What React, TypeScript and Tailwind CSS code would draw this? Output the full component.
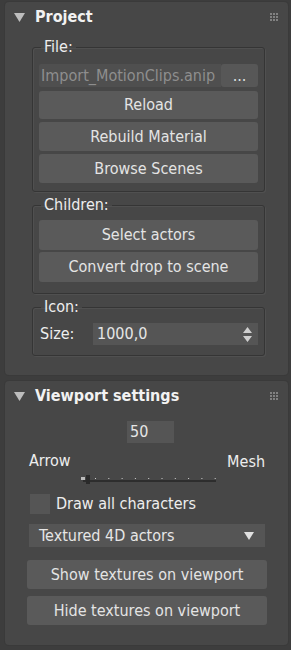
import { ReactNode } from "react";

const font = { fontFamily: '"DejaVu Sans Condensed", "DejaVu Sans", "Liberation Sans", sans-serif' };

function Grip() {
  return (
    <svg width="9" height="9" viewBox="0 0 9 9" className="opacity-70">
      {[0, 3, 6].map((y) =>
        [0, 3, 6].map((x) => (
          <rect key={`${x}-${y}`} x={x} y={y} width="2" height="2" fill="#9a9a9a" />
        ))
      )}
    </svg>
  );
}

function PanelHeader({ title }: { title: string }) {
  return (
    <div className="flex h-[30px] items-center pl-[9px] pr-[9px]">
      <svg width="11" height="9" viewBox="0 0 11 9" className="mr-[10px]">
        <path d="M0 0 H11 L5.5 9 Z" fill="#bdbdbd" />
      </svg>
      <span className="flex-1 text-[16px] font-bold text-[#f2f2f2]">{title}</span>
      <Grip />
    </div>
  );
}

function Button({ children, className = "" }: { children: ReactNode; className?: string }) {
  return (
    <div
      className={`flex items-center justify-center rounded-[3px] bg-[#5a5a5a] text-[16px] leading-[20px] text-[#e4e4e4] ${className}`}
    >
      {children}
    </div>
  );
}

function Group({ label, children, className = "" }: { label: string; children: ReactNode; className?: string }) {
  return (
    <fieldset
      className={`rounded-[3px] border border-[#353535] shadow-[inset_1px_1px_0_#505050,1px_1px_0_#505050] px-[6px] ${className}`}
    >
      <legend className="ml-[2px] px-[3px] text-[16px] leading-[18px] text-[#eeeeee]">{label}</legend>
      {children}
    </fieldset>
  );
}

export default function App() {
  return (
    <div className="min-h-[650px] w-[291px] bg-[#3d3d3d] pt-[2px]" style={font}>
      {/* Project */}
      <div className="ml-[5px] mr-[3px] h-[373px] rounded-[4px] bg-[#474747] shadow-[0_0_0_1px_#3a3a3a]">
        <PanelHeader title="Project" />
        <div className="pl-[27px] pr-[23px] pt-[6px]">
          <Group label="File:" className="h-[154px]">
            <div className="mt-[8px] flex h-[23px] items-stretch">
              <div className="flex flex-1 items-center overflow-hidden whitespace-nowrap rounded-l-[2px] bg-[#4f4f4f] pl-[2px] text-[16px] text-[#8e8e8e]">
                Import_MotionClips.anip
              </div>
              <div className="flex w-[37px] items-end justify-center rounded-[3px] bg-[#575757] pb-[3px] text-[16px] leading-none text-[#e0e0e0]">
                ...
              </div>
            </div>
            <div className="mt-[4px] flex flex-col gap-[3px]">
              <Button className="h-[28px]">Reload</Button>
              <Button className="h-[29px]">Rebuild Material</Button>
              <Button className="h-[29px]">Browse Scenes</Button>
            </div>
          </Group>

          <Group label="Children:" className="mt-[4px] h-[98px]">
            <div className="mt-[6px] flex flex-col gap-[2px]">
              <Button className="h-[30px]">Select actors</Button>
              <Button className="h-[30px]">Convert drop to scene</Button>
            </div>
          </Group>

          <Group label="Icon:" className="mt-[4px] h-[58px]">
            <div className="mt-[7px] flex h-[22px] items-center">
              <span className="w-[54px] pl-[1px] text-[16px] text-[#eeeeee]">Size:</span>
              <div className="flex h-full flex-1 items-center justify-between bg-[#555555] pl-[4px] pr-[6px] text-[16px] text-[#e6e6e6]">
                <span>1000,0</span>
                <svg width="9" height="15" viewBox="0 0 9 15">
                  <path d="M0 6 L4.5 0 L9 6 Z M0 9 L9 9 L4.5 15 Z" fill="#cfcfcf" />
                </svg>
              </div>
            </div>
          </Group>
        </div>
      </div>

      {/* Viewport settings */}
      <div className="ml-[5px] mr-[3px] mt-[6px] h-[264px] rounded-[4px] bg-[#474747] shadow-[0_0_0_1px_#3a3a3a]">
        <PanelHeader title="Viewport settings" />
        <div className="pl-[22px] pr-[21px] pt-[10px]">
          <div className="flex justify-center pl-[7px]">
            <div className="flex h-[22px] w-[47px] items-center bg-[#555555] pl-[3px] text-[16px] text-[#e6e6e6]">
              50
            </div>
          </div>
          <div className="mt-[8px] flex h-[20px] items-start justify-between px-[2px]">
            <span className="text-[16px] leading-[20px] text-[#eeeeee]">Arrow</span>
            <span className="mt-[1px] text-[16px] leading-[20px] text-[#eeeeee]">Mesh</span>
          </div>
          <div className="ml-[54px] mt-[3px] h-[12px] w-[137px]">
            <svg width="137" height="12" viewBox="0 0 137 12">
              {Array.from({ length: 10 }).map((_, i) => (
                <rect key={i} x={14 + i * 13.3} y="4" width="1" height="1" fill="#d0d0d0" />
              ))}
              <rect x="2" y="6" width="133" height="2" fill="#2d2d2d" />
              <rect x="0" y="3" width="4" height="3" fill="#bbbbbb" />
              <rect x="5" y="1" width="4" height="9" fill="#2a2a2a" />
            </svg>
          </div>
          <div className="mt-[8px] flex h-[20px] items-center gap-[6px] pl-[3px]">
            <div className="h-[20px] w-[20px] bg-[#555555]" />
            <span className="text-[16px] leading-[20px] text-[#eeeeee]">Draw all characters</span>
          </div>
          <div className="mx-[2px] mt-[10px] flex h-[23px] items-center justify-between bg-[#555555] pl-[10px] pr-[11px] text-[16px] text-[#e6e6e6]">
            <span>Textured 4D actors</span>
            <svg width="10" height="8" viewBox="0 0 10 8">
              <path d="M0 0 H10 L5 8 Z" fill="#e0e0e0" />
            </svg>
          </div>
          <div className="mt-[13px] flex flex-col gap-[7px]">
            <Button className="h-[29px]">Show textures on viewport</Button>
            <Button className="h-[29px]">Hide textures on viewport</Button>
          </div>
        </div>
      </div>
    </div>
  );
}
